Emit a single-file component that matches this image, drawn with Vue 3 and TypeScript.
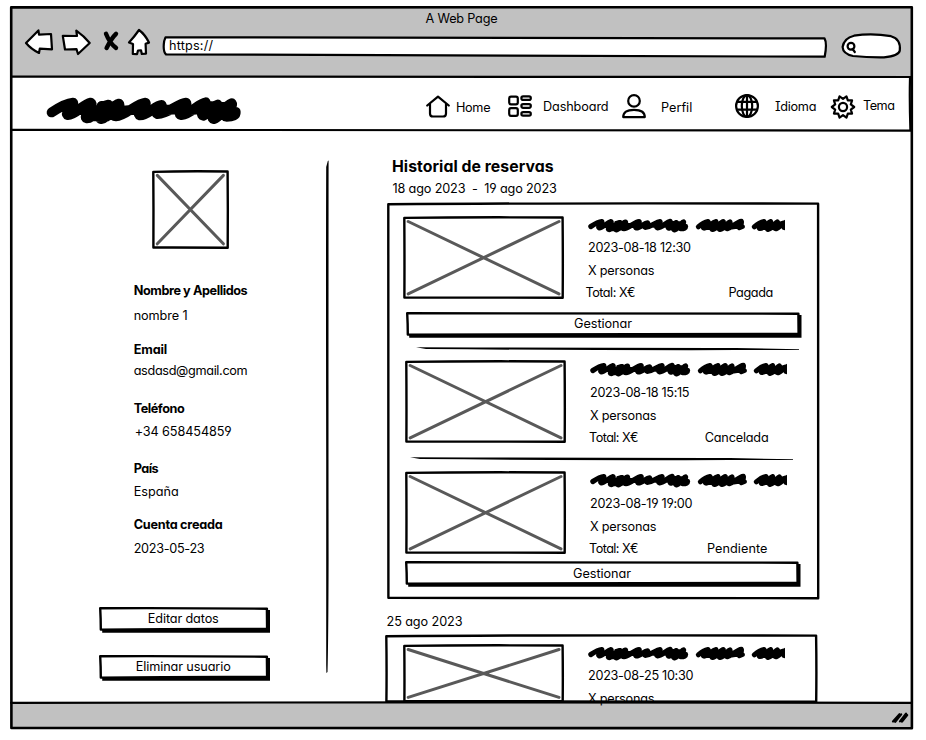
<script setup lang="ts">
import type { Directive } from 'vue'

interface Label { text: string; width: number }
interface Reservation {
  id: string
  date: Label
  total: Label
  status: Label
  manage: boolean
}

/** Tracks a label so that its letters span the given width in pixels. */
const vFit: Directive<HTMLElement, number> = {
  mounted(el, { value }) {
    const count = (el.textContent ?? '').length
    const natural = el.getBoundingClientRect().width
    if (count > 1) el.style.letterSpacing = `${((value + 1 - natural) / (count - 1)).toFixed(3)}px`
  },
}

/** Slightly uneven rectangle, as drawn by hand. */
const frame = (w: number, h: number, wobble = 0.6): string => {
  const k = wobble
  return `M1.3 ${1.3 + k}Q${w * 0.4} ${1.3 - k / 2} ${w - 1.4} ${1.3 + k / 3}Q${w - 1.2 + k / 3} ${h * 0.5} ${w - 1.3} ${h - 1.3}Q${w * 0.5} ${h - 1.3 - k / 2} ${1.4} ${h - 1.3 - k / 3}Q${1.3 + k / 2} ${h * 0.5} 1.3 ${1.3 + k}Z`
}

const buttonFace = (w: number): string =>
  `M1.2 1.2Q${w * 0.5} .9 ${w - 3.6} 1.7L${w - 3.4} 22Q${w * 0.5} 21.7 1.8 22.6Q1.8 12 1.2 1.2Z`

/** Ten-toothed cog around (12, 12). */
const cog = Array.from({ length: 20 }, (_, i) => {
  const angle = ((i * 18 + 18) * Math.PI) / 180
  const r = i % 2 === 0 ? 11.2 : 8.2
  return `${(12 + r * Math.sin(angle)).toFixed(2)},${(12 - r * Math.cos(angle)).toFixed(2)}`
}).join(' ')

const profile: { key: string; label: Label; value: Label }[] = [
  { key: 'name', label: { text: 'Nombre y Apellidos', width: 113 }, value: { text: 'nombre 1', width: 53 } },
  { key: 'email', label: { text: 'Email', width: 32.5 }, value: { text: 'asdasd@gmail.com', width: 113 } },
  { key: 'phone', label: { text: 'Teléfono', width: 50 }, value: { text: '+34 658454859', width: 96 } },
  { key: 'country', label: { text: 'País', width: 24 }, value: { text: 'España', width: 44 } },
  { key: 'created', label: { text: 'Cuenta creada', width: 88 }, value: { text: '2023-05-23', width: 70 } },
]

const actions: Label[] = [
  { text: 'Editar datos', width: 70 },
  { text: 'Eliminar usuario', width: 94 },
]

const reservations: Reservation[] = [
  { id: 'first', date: { text: '2023-08-18 12:30', width: 102 }, total: { text: 'Total: X€', width: 49 }, status: { text: 'Pagada', width: 44 }, manage: true },
  { id: 'second', date: { text: '2023-08-18 15:15', width: 98.5 }, total: { text: 'Total: X€', width: 48.5 }, status: { text: 'Cancelada', width: 63 }, manage: false },
  { id: 'third', date: { text: '2023-08-19 19:00', width: 101.5 }, total: { text: 'Total: X€', width: 48.5 }, status: { text: 'Pendiente', width: 59.5 }, manage: true },
]

const scribbleLong = 'M35 67Q75 40 99 38C105 48 70 72 84 75C105 76 130 42 152 38C165 48 125 82 141 85C160 86 175 48 205 44C212 55 165 84 184 87C205 85 215 46 237 41C245 52 205 78 228 79C255 78 290 40 316 38C325 48 285 72 300 76C325 76 345 46 365 45C372 55 340 68 352 72C385 70 415 40 438 38C446 48 405 72 424 75C455 72 475 40 497 37C505 50 475 74 490 77C505 72 515 50 533 44C542 56 505 84 522 87C540 84 555 46 575 40C583 52 540 76 560 80Q588 80 587 66L540 60L500 62M150 62L235 62M140 75L175 60L190 55L190 78L232 72M90 60L130 60M150 52L140 66M150 78L200 80M185 48L232 50M250 62L300 58M296 60L352 60M360 60L420 58M430 60L490 58M495 70L560 76M500 48L570 52M510 55L520 80L555 70L570 60'
const scribbleMid = 'M355 50Q370 36 384 34C390 42 362 52 372 54C388 54 394 36 408 34C412 42 388 56 398 58C412 56 418 36 430 34C434 44 410 56 420 58C434 56 440 38 450 35C454 44 432 54 442 56C458 52 470 34 484 33C488 42 474 50 478 53L487 49M372 46L448 46M384 52L440 52M378 40L444 42M446 47L482 42M450 51L480 47'
const scribbleShort = 'M523 50Q538 36 552 34C558 42 530 54 540 55C556 55 562 36 572 34C576 42 556 56 564 58C578 56 584 38 592 35C596 44 578 54 588 56C602 50 610 36 628 31M538 47L592 47M545 52L586 52M548 40L590 42M595 47L628 40M600 42L612 38L612 52L628 54'
</script>

<template>
  <div class="page">
    <div class="window">
      <header class="chrome">
        <div class="title"><span v-fit="71">A Web Page</span></div>
        <div class="toolbar">
          <svg class="tool back" viewBox="24 28 30 32"><path d="M26 43L38.4 30.4L39 34.6L51 34L52 49.4L39.8 48.6L39 53Q31 49 26 43Z" /></svg>
          <svg class="tool forward" viewBox="60 28 32 32"><path d="M62.8 35.8L77 36L76.3 30.6Q84 36 89.7 43L78 54L76.5 49.2L65 49.5Z" /></svg>
          <svg class="tool stop" viewBox="102 28 18 32"><path d="M106 33.8Q109.8 43.4 116 47.9M116 33.8Q111.4 38.2 106.6 48" /></svg>
          <svg class="tool home" viewBox="127 28 24 32"><path d="M139 30Q134.5 36.5 129 42.5L133 44L132.8 54L137 54.2L138 50.5L141 50.3L141.8 54L146 53.6L145.6 43.8L149 42.6Q145 34.4 139 30Z" /></svg>
          <div class="url">
            <svg viewBox="162 28 667 32"><path d="M165.5 37.3Q500 36.4 824.5 38.4Q827.3 43 824.7 56.7Q500 55.6 166 54.4Q162.6 51 164.2 41Z" /></svg>
            <span v-fit="43">https://</span>
          </div>
          <svg class="tool search" viewBox="840 28 63 32">
            <path d="M854 35.7Q872 33 891 36.2Q901 39 899.8 50.5Q899 56 884 57.3Q868 57.5 853 56Q843 54 842.6 47Q844 38 854 35.7Z" />
            <circle cx="851" cy="46.2" r="3.4" /><path d="M852.6 49L854.8 52" />
          </svg>
        </div>
      </header>

      <nav class="nav">
        <svg class="brand" viewBox="0 0 210 40"><path :d="scribbleLong" transform="scale(.33333)" /></svg>
        <a class="link n-home">
          <svg viewBox="0 0 24 24"><path d="M1.2 10.5L12 1.6L22.8 10.5M4 8.6V18.4Q4 21.5 7 21.5H17Q20 21.5 20 18.4V8.6" /></svg>
          <span v-fit="35">Home</span>
        </a>
        <a class="link n-dash">
          <svg viewBox="0 0 24 24"><rect x="1.2" y="1.6" width="8.6" height="7.8" rx="1.8" /><rect x="1.2" y="13.1" width="8.6" height="7.8" rx="1.8" /><rect x="13.4" y="1.4" width="9.4" height="3.5" rx="1.7" /><rect x="13.4" y="9.1" width="9.4" height="3.7" rx="1.7" /><rect x="13.4" y="17.2" width="9.4" height="3.5" rx="1.7" /></svg>
          <span v-fit="63">Dashboard</span>
        </a>
        <a class="link n-user">
          <svg viewBox="0 0 24 24"><circle cx="12" cy="6.9" r="5.8" /><path d="M1.2 23.1H22.8Q22.8 15.8 12 15.8Q1.2 15.8 1.2 23.1Z" /></svg>
          <span v-fit="29">Perfil</span>
        </a>
        <a class="link n-lang">
          <svg viewBox="0 0 24 24"><circle cx="12" cy="12" r="10.9" /><ellipse cx="12" cy="12" rx="5.2" ry="10.9" /><path d="M12 1V23M2.2 7.8H21.8M2.2 15.7H21.8" /></svg>
          <span v-fit="38.5">Idioma</span>
        </a>
        <a class="link n-theme">
          <svg viewBox="0 0 24 24"><circle cx="12" cy="12" r="4.1" /><polygon :points="cog" /></svg>
          <span v-fit="31">Tema</span>
        </a>
      </nav>

      <main class="body">
        <aside class="sidebar">
          <svg class="avatar" viewBox="0 0 77 79"><path :d="frame(77, 79)" /><path class="cross" d="M5.3 5.4L71.4 73.8M71.4 5.4L5.3 73.8" /></svg>
          <dl class="profile">
            <div v-for="row in profile" :key="row.key" :class="['field', row.key]">
              <dt><span v-fit="row.label.width">{{ row.label.text }}</span></dt>
              <dd><span v-fit="row.value.width">{{ row.value.text }}</span></dd>
            </div>
          </dl>
          <div class="actions">
            <button v-for="action in actions" :key="action.text" class="button">
              <svg viewBox="0 0 171.5 26"><path class="shade" d="M3.2 3H171V25.7H3.2Z" /><path class="face" :d="buttonFace(171.5)" /></svg>
              <span v-fit="action.width">{{ action.text }}</span>
            </button>
          </div>
        </aside>

        <svg class="divider" viewBox="0 0 4 514"><path d="M1.8 1L2.6 .6Q2.4 250 2.6 400Q2.4 480 1.5 512L.4 513L.2 505V300Q-.2 100 .2 7Z" /></svg>

        <section class="history">
          <h1><span v-fit="160.5">Historial de reservas</span></h1>
          <p class="range"><span v-fit="72">18 ago 2023</span><i>-</i><span v-fit="71.5">19 ago 2023</span></p>

          <div class="card">
            <svg class="outline" viewBox="0 0 432.5 397.5"><path :d="frame(432.5, 397.5, 1)" /></svg>
            <template v-for="item in reservations" :key="item.id">
              <article :class="['item', item.id]">
                <svg class="photo" viewBox="0 0 161 83"><path :d="frame(161, 83)" /><path class="cross" d="M5.2 5.5L156 77.9M156 5.5L5.2 77.9" /></svg>
                <div class="details">
                  <svg class="scribble" viewBox="24 24 591 44">
                    <path class="long" :d="scribbleLong" transform="translate(14.5 14.5) scale(.515)" />
                    <path :d="scribbleMid" /><path :d="scribbleShort" />
                  </svg>
                  <p><span v-fit="item.date.width">{{ item.date.text }}</span></p>
                  <p><span v-fit="65.5">X personas</span></p>
                  <p class="sum"><span v-fit="item.total.width">{{ item.total.text }}</span><span class="status" v-fit="item.status.width">{{ item.status.text }}</span></p>
                </div>
              </article>
              <button v-if="item.manage" :class="['button', 'wide', 'manage-' + item.id]">
                <svg viewBox="0 0 396 26"><path class="shade" d="M3.2 3H395.5V25.7H3.2Z" /><path class="face" :d="buttonFace(396)" /></svg>
                <span v-fit="57">Gestionar</span>
              </button>
              <svg v-if="item.id !== 'third'" :class="['rule', 'rule-' + item.id]" viewBox="0 0 383 4"><path d="M0 .3L60 .5Q220 .6 320 1.1L383 2.2L383 3.1L320 3.1Q150 3.3 10 2Z" /></svg>
            </template>
          </div>

          <p class="day"><span v-fit="75">25 ago 2023</span></p>

          <div class="card partial">
            <svg class="outline" viewBox="0 0 432.5 69"><path :d="frame(432.5, 69, 1)" /></svg>
            <article class="item first">
              <svg class="photo low" viewBox="0 0 161 58.5"><path :d="frame(161, 58.5)" /><path class="cross" d="M5.2 5.5L156 53.4M156 5.5L5.2 53.4" /></svg>
              <div class="details">
                <svg class="scribble" viewBox="24 24 591 44">
                  <path class="long" :d="scribbleLong" transform="translate(14.5 14.5) scale(.515)" />
                  <path :d="scribbleMid" /><path :d="scribbleShort" />
                </svg>
                <p><span v-fit="104.5">2023-08-25 10:30</span></p>
                <p><span v-fit="65.5">X personas</span></p>
              </div>
            </article>
          </div>
        </section>
      </main>

      <footer class="status-bar">
        <svg viewBox="0 0 18 14"><path d="M2 11.5L8.5 4.2M4.2 11.8L10.2 4.4M9 11.4L15 3.6M11 11.6L16.2 5" /></svg>
      </footer>
    </div>

    <svg class="lines" viewBox="0 0 926 740">
      <path d="M11.2 7.4Q400 6.6 911.8 7.2Q912.8 300 911.9 728.2Q400 727.5 11.4 728Q10.6 400 11.2 7.4Z" />
      <path class="thin" d="M11 76.6Q300 77.5 911 77M910 78Q909.4 100 910.4 130M11 129.8Q400 130.4 911 130.6M11 702.8Q200 701.8 430 702.3Q700 703.2 912 702.9" />
    </svg>
  </div>
</template>

<style>
body { margin: 0; background: #fff; overflow: hidden; }
</style>

<style scoped>
.page {
  position: relative;
  box-sizing: border-box;
  width: 926px;
  height: 740px;
  padding: 7px 0 0 11px;
  overflow: hidden;
  background: #fff;
  color: #000;
  font: 12.7px/16px Inter, "Noto Sans", sans-serif;
  font-feature-settings: "cv11", "cv04", "cv08", "kern";
}
.page span { display: inline-block; white-space: nowrap; }
.page i { font-style: normal; }
svg { display: block; flex: none; overflow: visible; fill: none; stroke: #000; stroke-width: 2.4; stroke-linejoin: round; stroke-linecap: round; }
p, h1, dl, dt, dd { margin: 0; }

.window { display: flex; flex-direction: column; width: 901px; height: 721px; }
.lines { position: absolute; inset: 0; width: 926px; height: 740px; z-index: 1; pointer-events: none; stroke-width: 2.6; }
.thin { stroke-width: 2.2; }

.chrome { height: 70px; background: #c1c1c1; }
.title { display: flex; justify-content: center; height: 16px; padding-top: 4px; }
.toolbar { display: flex; height: 32px; padding: 1px 0 0 13px; }
.tool { height: 32px; fill: #fff; stroke-width: 2.2; }
.back { width: 30px; }
.forward { width: 32px; margin-left: 6px; }
.stop { width: 18px; margin-left: 10px; fill: none; stroke-width: 4.4; }
.home { width: 24px; margin-left: 7px; }
.url { position: relative; width: 667px; margin-left: 11px; padding: 10px 0 0 7px; box-sizing: border-box; }
.url svg { position: absolute; inset: 0; width: 667px; height: 32px; fill: #fff; stroke-width: 2.2; }
.url span { position: relative; }
.search { width: 63px; margin-left: 11px; }

.nav { position: relative; display: flex; align-items: flex-start; height: 54px; background: #fff; }
.brand { width: 210px; height: 40px; margin: 13px 0 0 29px; stroke-width: 30; }
.link { display: flex; align-items: flex-start; }
.link svg { width: 24px; height: 24px; stroke-width: 2.2; }
.n-home { margin: 18px 0 0 176px; }
.n-home span { margin: 5px 0 0 6px; width: 37px; }
.n-dash { margin: 18px 0 0 15px; }
.n-dash span { margin: 4px 0 0 11px; width: 65px; }
.n-user { margin: 17px 0 0 14px; }
.n-user span { margin: 6px 0 0 15px; width: 30px; }
.n-lang { margin: 17px 0 0 44px; }
.n-lang span { margin: 5px 0 0 16px; width: 41px; }
.n-theme { margin: 18px 0 0 15px; }
.n-theme span { margin: 3px 0 0 8px; }

.body { position: relative; z-index: 2; display: flex; height: 572px; }
.sidebar { width: 315px; }
.avatar { width: 77px; height: 79px; margin: 39px 0 0 141px; }
.cross { stroke: #595959; stroke-width: 3; }
.profile { display: flex; flex-direction: column; margin: 34px 0 0 122.7px; }
.field { height: 59px; }
.field dt { height: 16px; font-weight: 700; }
.field dd { height: 16px; margin-top: 7px; }
.name dd { margin-top: 9px; }
.email dd { margin-top: 5px; }
.phone { height: 60px; }
.country { height: 56px; }
.created { height: 40px; }
.created dd { margin-top: 8px; }
.phone dd span { margin-left: 1px; }
.actions { display: flex; flex-direction: column; gap: 22px; margin: 50px 0 0 88px; }
.button { position: relative; display: flex; justify-content: center; width: 171.5px; height: 26px; padding: 4px 3px 0 0; box-sizing: border-box; border: 0; background: none; color: inherit; font: inherit; font-feature-settings: inherit; }
.button svg { position: absolute; inset: 0; width: 100%; height: 26px; }
.button span { position: relative; }
.shade { fill: #000; stroke: none; }
.face { fill: #fff; }

.divider { width: 4px; height: 514px; margin-top: 29px; fill: #000; stroke: none; }
.divider path, .rule path { stroke: none; fill: #000; }

.history { width: 440px; margin-left: 55px; }
h1 { height: 22px; padding: 25px 0 0 7px; font-size: 15.8px; line-height: 22px; }
.range { display: flex; height: 16px; margin: 3px 0 0 7.5px; }
.range i { width: 19px; text-align: center; }
.card { position: relative; display: flex; flex-direction: column; width: 432.5px; height: 397.5px; margin: 4.5px 0 0 2px; }
.outline { position: absolute; inset: 0; width: 432.5px; height: 100%; }
.item { position: relative; display: flex; height: 83px; margin: 14px 0 0 16px; }
.photo { width: 161px; height: 83px; }
.low { height: 58.5px; }
.details { margin-left: 24px; }
.details p { height: 16px; margin-top: 7px; }
.details .scribble + p { margin-top: 7.5px; }
.scribble { width: 197px; height: 15px; margin-top: 2px; stroke-width: 15; overflow: hidden; }
.scribble .long { stroke-width: 30; }
.details .sum { display: flex; margin-top: 6px; }
.first .sum { margin-left: -2.5px; }
.status { margin-left: auto; }
.first .status { margin-right: 12px; }
.second .sum, .third .sum { margin-left: -1px; }
.second .status { margin-right: 18.5px; }
.third .status { margin-right: 19.5px; }
.second, .third { margin-left: 18px; }
.second { margin-top: 9px; }
.second .scribble + p, .third .scribble + p { margin-top: 8.5px; }
.third { margin-top: 10px; }
.wide { width: 396px; margin-left: 19px; padding-right: 2px; }
.manage-first { margin-top: 13.5px; }
.manage-third { margin: 7.5px 0 0 18px; padding-top: 4.5px; }
.rule { width: 383px; height: 4px; }
.rule-first { margin: 8.5px 0 0 29px; }
.rule-second { margin: 14px 0 0 23px; }
.day { height: 16px; margin: 15px 0 0 1.5px; }
.partial { height: 69px; margin: 3.5px 0 0 0; }
.partial .item { margin: 10px 0 0 18px; height: 59px; }

.status-bar { display: flex; justify-content: flex-end; height: 25px; padding: 7px 3px 0 0; box-sizing: border-box; background: #c1c1c1; }
.status-bar svg { width: 18px; height: 14px; stroke-width: 2.2; }
</style>
